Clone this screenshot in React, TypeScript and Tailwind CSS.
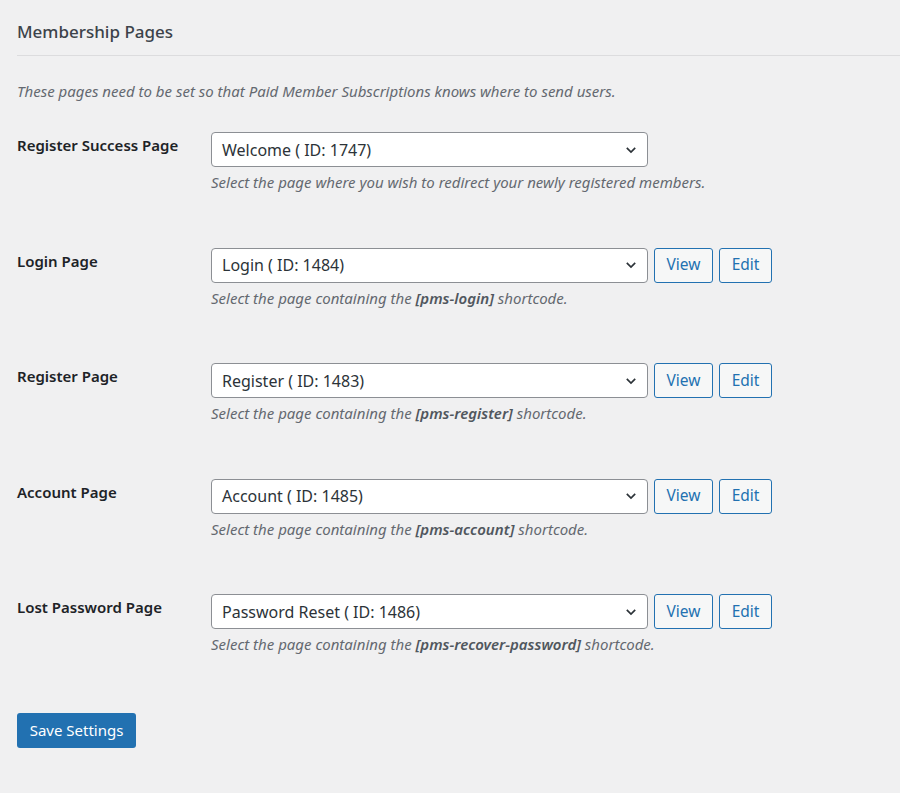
const rows = [
  { label: "Register Success Page", value: "Welcome ( ID: 1747)", buttons: false, code: "" },
  { label: "Login Page", value: "Login ( ID: 1484)", buttons: true, code: "[pms-login]" },
  { label: "Register Page", value: "Register ( ID: 1483)", buttons: true, code: "[pms-register]" },
  { label: "Account Page", value: "Account ( ID: 1485)", buttons: true, code: "[pms-account]" },
  { label: "Lost Password Page", value: "Password Reset ( ID: 1486)", buttons: true, code: "[pms-recover-password]" },
];

export default function App() {
  return (
    <div
      className="min-h-[793px] bg-[#f0f0f1] text-[#1d2327] pl-[17px] pt-[19px]"
      style={{ fontFamily: '"Noto Sans", sans-serif' }}
    >
      <h2 className="text-[17px] font-medium text-[#3c434a] pb-[10px] border-b border-[#dcdcde]">Membership Pages</h2>
      <p className="mt-[24px] text-[15px] italic text-[#646970]">
        These pages need to be set so that Paid Member Subscriptions knows where to send users.
      </p>
      <div className="mt-[30px] flex flex-col gap-[54px]">
        {rows.map((r) => (
          <div key={r.label} className="flex">
            <div className="w-[194px] pt-[2px] text-[15px] font-semibold text-[#1d2327]">{r.label}</div>
            <div>
              <div className="flex gap-[6px]">
                <div className="w-[437px] h-[35px] bg-white border border-[#8c8f94] rounded-[4px] flex items-center justify-between pl-[10px] pr-[9px] text-[16px] text-[#2c3338]">
                  <span>{r.value}</span>
                  <svg width="14" height="14" viewBox="0 0 20 20" fill="none" stroke="#2c3338" strokeWidth="2.4">
                    <path d="M4 7l6 6 6-6" />
                  </svg>
                </div>
                {r.buttons && (
                  <>
                    <button className="h-[35px] w-[59px] border border-[#2271b1] rounded-[3px] text-[#2271b1] bg-[#f6f7f7] text-[15.5px]">View</button>
                    <button className="h-[35px] w-[53px] border border-[#2271b1] rounded-[3px] text-[#2271b1] bg-[#f6f7f7] text-[15.5px]">Edit</button>
                  </>
                )}
              </div>
              <p className="mt-[4px] text-[15px] italic text-[#646970]">
                {r.code ? (
                  <>
                    Select the page containing the <b className="font-semibold text-[#50575e]">{r.code}</b> shortcode.
                  </>
                ) : (
                  "Select the page where you wish to redirect your newly registered members."
                )}
              </p>
            </div>
          </div>
        ))}
      </div>
      <button className="mt-[57px] h-[35px] w-[119px] bg-[#2271b1] text-white rounded-[3px] text-[15px]">Save Settings</button>
    </div>
  );
}
